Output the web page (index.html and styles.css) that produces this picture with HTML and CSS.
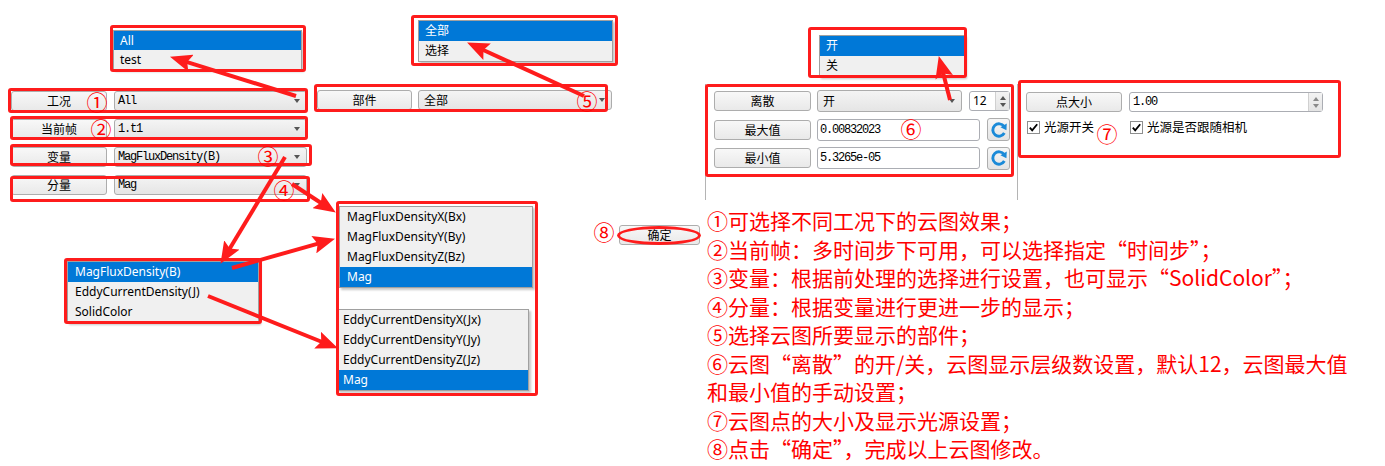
FILE: index.html
```html
<!DOCTYPE html>
<html lang="zh-CN">
<head>
<meta charset="utf-8">
<title>云图设置</title>
<link rel="stylesheet" href="styles.css">
</head>
<body>
<div class="canvas">

  <!-- left settings column -->
  <div class="node n-left">
    <div class="row"><div class="btn w96">工况</div><div class="combo c193"><span class="mono">All</span></div></div>
    <div class="row"><div class="btn w96">当前帧</div><div class="combo c193"><span class="mono">1.t1</span></div></div>
    <div class="row"><div class="btn w96">变量</div><div class="combo c193"><span class="mono">MagFluxDensity(B)</span></div></div>
    <div class="row"><div class="btn w96">分量</div><div class="combo c193"><span class="mono">Mag</span></div></div>
  </div>

  <div class="node n-part">
    <div class="row"><div class="btn w95">部件</div><div class="combo c194"><span class="cjk">全部</span></div></div>
  </div>

  <!-- popups -->
  <div class="list l-all"><div class="it sel">All</div><div class="it">test</div></div>
  <div class="list l-part"><div class="it sel">全部</div><div class="it">选择</div></div>
  <div class="list l-onoff"><div class="it sel">开</div><div class="it">关</div></div>
  <div class="list l-var">
    <div class="it sel">MagFluxDensity(B)</div>
    <div class="it">EddyCurrentDensity(J)</div>
    <div class="it">SolidColor</div>
  </div>
  <div class="list l-c1">
    <div class="it">MagFluxDensityX(Bx)</div>
    <div class="it">MagFluxDensityY(By)</div>
    <div class="it">MagFluxDensityZ(Bz)</div>
    <div class="it sel">Mag</div>
  </div>
  <div class="list l-c2">
    <div class="it">EddyCurrentDensityX(Jx)</div>
    <div class="it">EddyCurrentDensityY(Jy)</div>
    <div class="it">EddyCurrentDensityZ(Jz)</div>
    <div class="it sel">Mag</div>
  </div>

  <!-- discrete panel -->
  <div class="node n-frame"></div>
  <div class="node n-disc">
    <div class="row r22">
      <div class="btn w97">离散</div>
      <div class="combo c145 h22"><span class="cjk">开</span></div>
      <div class="spin s41"><span class="sv">12</span><div class="spin-btns"><i class="up"></i><i class="dn"></i></div></div>
    </div>
    <div class="row r22">
      <div class="btn w97">最大值</div>
      <div class="input i163"><span class="mono">0.00832023</span></div>
      <div class="rbtn"><svg width="18" height="18" viewBox="0 0 16 16"><path d="M12.76 10.75 A5.5 5.5 0 1 1 12.5 4.85" fill="none" stroke="#1a8ad8" stroke-width="2.6"/><path d="M14.9 2.3 L14.6 8.2 L9.3 5.6 Z" fill="#1a8ad8"/></svg></div>
    </div>
    <div class="row r22">
      <div class="btn w97">最小值</div>
      <div class="input i163"><span class="mono">5.3265e-05</span></div>
      <div class="rbtn"><svg width="18" height="18" viewBox="0 0 16 16"><path d="M12.76 10.75 A5.5 5.5 0 1 1 12.5 4.85" fill="none" stroke="#1a8ad8" stroke-width="2.6"/><path d="M14.9 2.3 L14.6 8.2 L9.3 5.6 Z" fill="#1a8ad8"/></svg></div>
    </div>
  </div>

  <!-- light panel -->
  <div class="node n-light">
    <div class="row">
      <div class="btn w96">点大小</div>
      <div class="spin s194"><span class="mono">1.00</span><div class="spin-btns dim"><i class="up"></i><i class="dn"></i></div></div>
    </div>
    <div class="row cbrow">
      <label class="cb cb1"><svg width="13" height="13" viewBox="0 0 13 13"><rect x="0.5" y="0.5" width="12" height="12" fill="#fff" stroke="#8e8f8f"/><path d="M2.8 6.6 L5.2 9.4 L10.2 3.2" fill="none" stroke="#000" stroke-width="1.8"/></svg><span>光源开关</span></label>
      <label class="cb"><svg width="13" height="13" viewBox="0 0 13 13"><rect x="0.5" y="0.5" width="12" height="12" fill="#fff" stroke="#8e8f8f"/><path d="M2.8 6.6 L5.2 9.4 L10.2 3.2" fill="none" stroke="#000" stroke-width="1.8"/></svg><span>光源是否跟随相机</span></label>
    </div>
  </div>

  <div class="node n-ok"><div class="btn wok">确定</div></div>

  <!-- notes -->
  <div class="node n-notes">
    <p>①可选择不同工况下的云图效果；</p>
    <p>②当前帧：多时间步下可用，可以选择指定“时间步”；</p>
    <p>③变量：根据前处理的选择进行设置，也可显示“SolidColor”；</p>
    <p>④分量：根据变量进行更进一步的显示；</p>
    <p>⑤选择云图所要显示的部件；</p>
    <p>⑥云图“离散”的开/关，云图显示层级数设置，默认12，云图最大值<br>和最小值的手动设置；</p>
    <p>⑦云图点的大小及显示光源设置；</p>
    <p>⑧点击“确定”，完成以上云图修改。</p>
  </div>

  <!-- annotation overlay -->
  <div class="hl h-all"></div>
  <div class="hl h-part"></div>
  <div class="hl h-onoff"></div>
  <div class="hl h-r1"></div>
  <div class="hl h-r2"></div>
  <div class="hl h-r3"></div>
  <div class="hl h-r4"></div>
  <div class="hl h-rp"></div>
  <div class="hl h-disc"></div>
  <div class="hl h-light"></div>
  <div class="hl h-var"></div>
  <div class="hl h-comp"></div>
  <div class="hl h-ok"></div>

  <span class="num u1">①</span>
  <span class="num u2">②</span>
  <span class="num u3">③</span>
  <span class="num u4">④</span>
  <span class="num u5">⑤</span>
  <span class="num u6">⑥</span>
  <span class="num u7">⑦</span>
  <span class="num u8">⑧</span>

  <svg class="arrows" width="1385" height="466" viewBox="0 0 1385 466">
    <defs>
      <marker id="ah" markerWidth="24" markerHeight="18" refX="9" refY="9" orient="auto" markerUnits="userSpaceOnUse">
        <path d="M0 0 L22 9 L0 18 L4 9 Z" fill="#fe1c1c"/>
      </marker>
    </defs>
    <g stroke="#fe1c1c" stroke-width="4" fill="none" marker-end="url(#ah)">
      <line x1="296" y1="96" x2="182.4" y2="60.6"/>
      <line x1="584" y1="96" x2="478.9" y2="48"/>
      <line x1="950" y1="100" x2="942" y2="68.6"/>
      <line x1="285" y1="157" x2="227.2" y2="252.7"/>
      <line x1="292" y1="184" x2="324.9" y2="205.5"/>
      <line x1="232" y1="268" x2="322.5" y2="242.3"/>
      <line x1="208" y1="296" x2="325.9" y2="343.5"/>
    </g>
  </svg>
</div>
</body>
</html>
```

FILE: styles.css
```css
html, body {
  margin: 0;
  padding: 0;
  background: #fff;
}

.canvas {
  position: relative;
  width: 1385px;
  height: 466px;
  overflow: hidden;
  font-family: "Noto Sans CJK SC", "Noto Sans", sans-serif;
  color: #000;
}

.node {
  position: absolute;
}

/* ---------- generic controls ---------- */
.row {
  display: flex;
  align-items: center;
}

.btn {
  box-sizing: border-box;
  height: 20px;
  border: 1px solid #adadad;
  border-radius: 3px;
  background: linear-gradient(#f8f8f8, #e9e9e9);
  font-size: 12px;
  line-height: 1;
  display: flex;
  align-items: center;
  justify-content: center;
}

.combo {
  box-sizing: border-box;
  height: 20px;
  border: 1px solid #acacac;
  border-radius: 3px;
  background: linear-gradient(#f4f4f4, #e5e5e5);
  display: flex;
  align-items: center;
  padding-left: 3px;
  position: relative;
}

.combo::after {
  content: "";
  position: absolute;
  right: 6px;
  top: 50%;
  margin-top: -2px;
  border-left: 3.5px solid transparent;
  border-right: 3.5px solid transparent;
  border-top: 4px solid #555;
}

.h22 { height: 22px; }

.mono {
  font-family: "Liberation Mono", monospace;
  font-size: 12px;
  letter-spacing: -1.2px;
  line-height: 1;
}

.cjk {
  font-size: 12px;
  line-height: 1;
  padding-left: 2px;
}

.input {
  box-sizing: border-box;
  height: 22px;
  border: 1px solid #abadb3;
  border-radius: 3px;
  background: #fff;
  display: flex;
  align-items: center;
  padding-left: 2px;
}

.spin {
  box-sizing: border-box;
  height: 20px;
  border: 1px solid #abadb3;
  border-radius: 3px;
  background: #fff;
  display: flex;
  align-items: center;
  padding-left: 3px;
}

.spin .sv {
  font-family: "Noto Sans", sans-serif;
  font-size: 12px;
  line-height: 1;
  flex: 1;
}

.spin .mono { flex: 1; }

.spin-btns {
  align-self: stretch;
  width: 13px;
  border-left: 1px solid #d0d0d0;
  background: linear-gradient(#f3f3f3, #e4e4e4);
  display: flex;
  flex-direction: column;
  justify-content: center;
  align-items: center;
  gap: 3px;
}

.spin-btns i {
  display: block;
  width: 0;
  height: 0;
  border-left: 3.5px solid transparent;
  border-right: 3.5px solid transparent;
}

.spin-btns .up { border-bottom: 4px solid #555; }
.spin-btns .dn { border-top: 4px solid #555; }
.spin-btns.dim .up { border-bottom-color: #8a8a8a; }
.spin-btns.dim .dn { border-top-color: #8a8a8a; }

.rbtn {
  box-sizing: border-box;
  width: 23px;
  height: 23px;
  border: 1px solid #adadad;
  border-radius: 3px;
  background: linear-gradient(#f6f6f6, #e4e4e4);
  display: flex;
  align-items: center;
  justify-content: center;
}

.w95 { width: 95px; }
.w96 { width: 96px; }
.w97 { width: 97px; }
.wok { width: 81px; }
.c193 { width: 193px; }
.c194 { width: 194px; }
.c145 { width: 145px; }
.s41 { width: 41px; }
.s194 { width: 194px; }
.i163 { width: 163px; }

/* ---------- groups ---------- */
.n-left {
  left: 11px;
  top: 91px;
  display: flex;
  flex-direction: column;
  gap: 8px;
}

.n-left .row { gap: 7px; height: 20px; }

.n-part { left: 317px; top: 90px; }
.n-part .row { gap: 6px; }

.n-frame {
  left: 705px;
  top: 84px;
  width: 313px;
  height: 116px;
  box-sizing: border-box;
  border-left: 1px solid #b4b4b4;
  border-right: 1px solid #b4b4b4;
}

.n-disc {
  left: 714px;
  top: 90px;
  display: flex;
  flex-direction: column;
  gap: 6.5px;
}

.n-disc .row { height: 22px; gap: 6px; }
.n-disc .row .spin { margin-left: 1px; }
.n-disc .row .rbtn { margin-left: 1px; }

.n-light {
  left: 1026px;
  top: 92px;
  display: flex;
  flex-direction: column;
  gap: 9px;
}

.n-light .row { gap: 7px; }

.cbrow { gap: 0 !important; }

.cb {
  display: flex;
  align-items: center;
  gap: 4px;
  font-size: 12.5px;
  line-height: 1;
  padding-left: 1px;
}

.cb1 { width: 102px; }

.n-ok { left: 619px; top: 225px; }

/* ---------- popup lists ---------- */
.list {
  position: absolute;
  box-sizing: border-box;
  border: 1px solid #a0a0a0;
  background: #f0f0f0;
  box-shadow: 2px 2px 2px rgba(0, 0, 0, 0.22);
  font-family: "Noto Sans", "Noto Sans CJK SC", sans-serif;
  font-size: 12px;
}

.list .it {
  height: 20px;
  line-height: 20px;
  padding-left: 6px;
  white-space: nowrap;
}

.list .it.sel {
  background: #0078d7;
  color: #fff;
}

.l-all { left: 113px; top: 30px; width: 189px; height: 40px; }
.l-all .it { height: 19px; line-height: 19px; }
.l-part { left: 418px; top: 20px; width: 195px; height: 42px; }
.l-onoff { left: 819px; top: 35px; width: 146px; height: 42px; }
.l-var { left: 67px; top: 261px; width: 192px; height: 62px; }
.l-var .it { padding-left: 7px; }
.l-c1 { left: 339px; top: 206px; width: 194px; height: 82px; }
.l-c1 .it { padding-left: 7px; }
.l-c2 { left: 337px; top: 309px; width: 192px; height: 82px; }
.l-c2 .it { padding-left: 5px; }

/* ---------- notes ---------- */
.n-notes {
  left: 707px;
  top: 206px;
  color: #ff0000;
  font-size: 21px;
  line-height: 28.5px;
  white-space: nowrap;
}

.n-notes p { margin: 0; }

/* ---------- red annotation overlay ---------- */
.hl {
  position: absolute;
  box-sizing: border-box;
  border: 3px solid #fe1c1c;
  border-radius: 3px;
}

.h-all { left: 110px; top: 25px; width: 196px; height: 47px; }
.h-part { left: 411px; top: 15px; width: 207px; height: 51px; }
.h-onoff { left: 808px; top: 27px; width: 159px; height: 51px; }
.h-r1 { left: 8px; top: 88px; width: 300px; height: 25px; }
.h-r2 { left: 10px; top: 116px; width: 298px; height: 24px; }
.h-r3 { left: 10px; top: 144px; width: 302px; height: 22px; }
.h-r4 { left: 10px; top: 176px; width: 300px; height: 26px; }
.h-rp { left: 314px; top: 84px; width: 294px; height: 28px; }
.h-disc { left: 705px; top: 84px; width: 309px; height: 93px; }
.h-light { left: 1018px; top: 80px; width: 323px; height: 78px; }
.h-var { left: 64px; top: 258px; width: 198px; height: 66px; }
.h-comp { left: 336px; top: 201px; width: 202px; height: 195px; }
.h-ok { left: 617px; top: 226px; width: 84px; height: 19px; border-radius: 50%; }

.num {
  position: absolute;
  color: #ff0000;
  font-size: 21px;
  line-height: 1;
  transform: translate(-50%, -50%);
}

.u1 { left: 97px; top: 101px; }
.u2 { left: 101px; top: 128px; }
.u3 { left: 268px; top: 155px; }
.u4 { left: 284px; top: 189px; }
.u5 { left: 587px; top: 100px; }
.u6 { left: 911px; top: 128px; }
.u7 { left: 1107px; top: 133px; }
.u8 { left: 604px; top: 231px; }

.arrows {
  position: absolute;
  left: 0;
  top: 0;
  pointer-events: none;
}
```
